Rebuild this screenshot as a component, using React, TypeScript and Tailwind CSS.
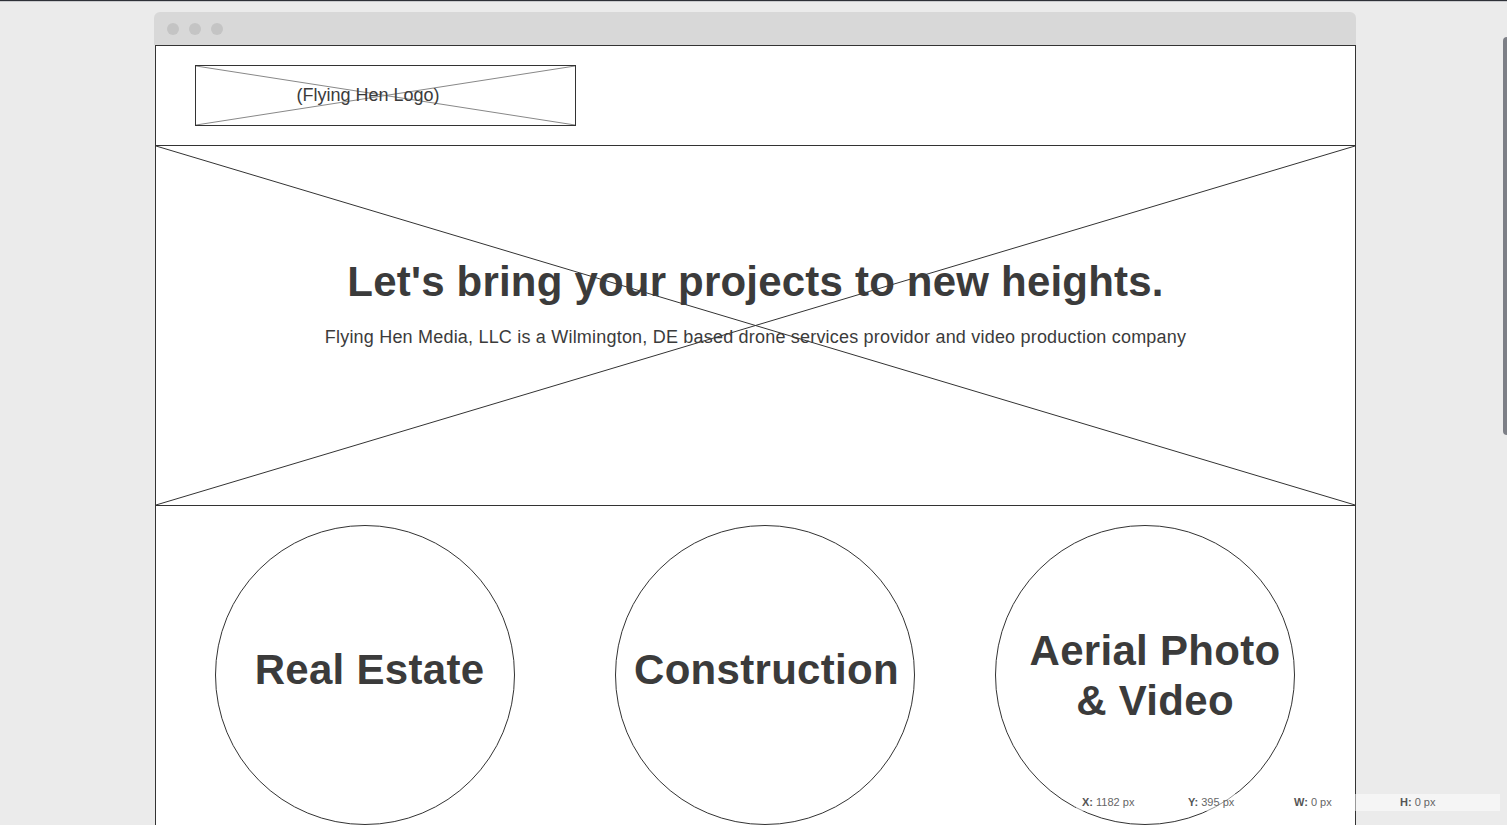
import React from 'react';

const font = { fontFamily: '"Liberation Sans", Arial, sans-serif' };

// placeholder cross drawn over an image box
const Cross: React.FC<{ stroke: string }> = ({ stroke }) => (
  <svg className="absolute inset-0 w-full h-full" preserveAspectRatio="none" viewBox="0 0 100 100">
    <line x1="0" y1="0" x2="100" y2="100" stroke={stroke} strokeWidth="1" vectorEffect="non-scaling-stroke" />
    <line x1="0" y1="100" x2="100" y2="0" stroke={stroke} strokeWidth="1" vectorEffect="non-scaling-stroke" />
  </svg>
);

const Service: React.FC<{ children: React.ReactNode; className?: string; textClass?: string }> = ({
  children,
  className = '',
  textClass = '',
}) => (
  <div
    className={`w-[300px] h-[300px] shrink-0 rounded-full border border-[#333] flex items-center justify-center text-center text-[42px] leading-[50px] font-bold tracking-[0.3px] text-[#3b3b3b] ${className}`}
  >
    <span className={textClass}>{children}</span>
  </div>
);

const StatusItem: React.FC<{ label: string; value: string }> = ({ label, value }) => (
  <div className="w-[106px] pl-[6px] text-[11px] text-[#666]">
    <span className="font-bold text-[#555]">{label}</span> {value}
  </div>
);

export default function App() {
  return (
    <div className="relative h-screen overflow-hidden bg-[#ebebeb]" style={font}>
      <div className="h-px bg-[#2e3138]" />
      <div className="h-px bg-[#c9cacd]" />

      <div className="ml-[154px] mt-[10px] w-[1202px]">
        {/* window chrome */}
        <div className="h-[33px] bg-[#d8d8d8] rounded-t-[6px] flex items-center gap-[10px] pl-[13px]">
          <span className="w-3 h-3 rounded-full bg-[#c4c4c4]" />
          <span className="w-3 h-3 rounded-full bg-[#c4c4c4]" />
          <span className="w-3 h-3 rounded-full bg-[#c4c4c4]" />
        </div>

        <div className="ml-px border-x border-t border-[#333] bg-white">
          {/* header */}
          <div className="h-[100px] border-b border-[#333] pt-[19px] pl-[39px]">
            <div className="relative w-[381px] h-[61px] border border-[#333] flex items-center justify-center pr-[35px]">
              <Cross stroke="#888" />
              <span className="relative text-[18px] text-[#3b3b3b]">(Flying Hen Logo)</span>
            </div>
          </div>

          {/* hero */}
          <div className="relative h-[360px] border-b border-[#333] pt-[112px] text-center text-[#3b3b3b]">
            <Cross stroke="#333" />
            <h1 className="relative text-[42px] leading-[48px] font-bold tracking-[0.2px]">
              Let's bring your projects to new heights.
            </h1>
            <p className="relative mt-[20px] text-[18px] leading-[22px] tracking-[0.2px]">
              Flying Hen Media, LLC is a Wilmington, DE based drone services providor and video production company
            </p>
          </div>

          {/* services */}
          <div className="flex pt-[19px] pl-[59px] pb-10">
            <Service textClass="-mt-[10px] pl-[9px]">Real Estate</Service>
            <Service className="ml-[100px]" textClass="-mt-[10px] pl-[3px]">
              Construction
            </Service>
            <Service className="ml-[80px]" textClass="mt-[2px] pl-[20px]">
              Aerial Photo
              <br />& Video
            </Service>
          </div>
        </div>
      </div>

      {/* scrollbar */}
      <div className="absolute right-0 top-[37px] w-1 h-[398px] rounded-l-full bg-[#7d7f86]" />

      {/* measurement readout */}
      <div className="absolute right-[7px] bottom-[14px] h-[17px] flex items-center bg-white/50">
        <StatusItem label="X:" value="1182 px" />
        <StatusItem label="Y:" value="395 px" />
        <StatusItem label="W:" value="0 px" />
        <StatusItem label="H:" value="0 px" />
      </div>
    </div>
  );
}
